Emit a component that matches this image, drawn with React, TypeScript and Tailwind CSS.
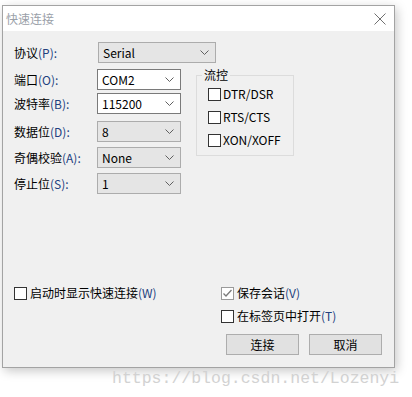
import React from "react";

const ui = "font-['Noto_Sans_CJK_SC','Noto_Sans',sans-serif] text-[12px] leading-[14px] text-black";

function Chevron() {
  return (
    <svg width="9" height="5" viewBox="0 0 9 5" className="shrink-0">
      <polyline points="0.5,0.5 4.5,4.5 8.5,0.5" fill="none" stroke="#606060" strokeWidth="1" />
    </svg>
  );
}

function Combo({ value, grey, width }: { value: string; grey?: boolean; width: string }) {
  return (
    <div
      className={`${width} h-[21px] flex items-center justify-between pl-[4px] pr-[6px] border ${
        grey ? "bg-[#e5e5e5] border-[#acacac]" : "bg-white border-[#7a7a7a]"
      }`}
    >
      <span>{value}</span>
      <Chevron />
    </div>
  );
}

function Label({ cn, key2 }: { cn: string; key2: string }) {
  return (
    <div className="w-[94px] shrink-0 pl-[11px] whitespace-nowrap">
      {cn}
      <span className="text-[#22407e]">{key2}</span>
    </div>
  );
}

function CheckBox({ checked, disabled }: { checked?: boolean; disabled?: boolean }) {
  return (
    <span
      className={`w-[13px] h-[13px] shrink-0 flex items-center justify-center border bg-white ${
        disabled ? "border-[#9a9a9a]" : "border-[#333333]"
      }`}
    >
      {checked && (
        <svg width="11" height="11" viewBox="0 0 11 11">
          <polyline points="1.5,5.5 4,8 9.5,2" fill="none" stroke="#7a7a7a" strokeWidth="1.3" />
        </svg>
      )}
    </span>
  );
}

export default function App() {
  return (
    <div className={`${ui} w-[412px] h-[397px] bg-white pt-[5px] pl-[2px] overflow-hidden`}>
      {/* dialog window */}
      <div className="w-[393px] h-[363px] flex flex-col border border-[#a3a3a3] shadow-[2px_3px_10px_rgba(0,0,0,0.22)]">
        {/* title bar */}
        <div className="h-[25px] bg-white flex items-center justify-between pl-[3px] pr-[8px] shrink-0">
          <span className="text-[#9aa0a8] mt-[1px]">快速连接</span>
          <svg width="12" height="12" viewBox="0 0 12 12">
            <path d="M0.5 0.5 L11.5 11.5 M11.5 0.5 L0.5 11.5" stroke="#707070" strokeWidth="1" fill="none" />
          </svg>
        </div>

        {/* body */}
        <div className="flex-1 bg-[#f0f0f0] flex flex-col">
          <div className="flex items-center mt-[11px]">
            <Label cn="协议" key2="(P):" />
            <div className="ml-[1px]">
              <Combo value="Serial" grey width="w-[118px]" />
            </div>
          </div>

          <div className="flex items-start mt-[6px]">
            <div className="flex flex-col">
              <div className="flex items-center">
                <Label cn="端口" key2="(O):" />
                <Combo value="COM2" width="w-[84px]" />
              </div>
              <div className="flex items-center mt-[3px]">
                <Label cn="波特率" key2="(B):" />
                <Combo value="115200" width="w-[84px]" />
              </div>
              <div className="flex items-center mt-[7px]">
                <Label cn="数据位" key2="(D):" />
                <Combo value="8" grey width="w-[84px]" />
              </div>
              <div className="flex items-center mt-[5px]">
                <Label cn="奇偶校验" key2="(A):" />
                <Combo value="None" grey width="w-[84px]" />
              </div>
              <div className="flex items-center mt-[5px]">
                <Label cn="停止位" key2="(S):" />
                <Combo value="1" grey width="w-[84px]" />
              </div>
            </div>

            <fieldset className="ml-[15px] -mt-[1px] w-[98px] h-[88px] border border-[#dcdcdc] pl-[5px]">
              <legend className="px-[2px]">流控</legend>
              <div className="flex flex-col gap-[9px] ml-[6px] mt-[5px]">
                {["DTR/DSR", "RTS/CTS", "XON/XOFF"].map((t) => (
                  <div key={t} className="flex items-center gap-[2px]">
                    <CheckBox />
                    <span>{t}</span>
                  </div>
                ))}
              </div>
            </fieldset>
          </div>

          <div className="flex-1" />

          {/* bottom options and buttons */}
          <div className="flex pb-[12px]">
            <div className="w-[218px] shrink-0 pl-[11px] flex items-start">
              <div className="flex items-center gap-[3px]">
                <CheckBox />
                <span>
                  启动时显示快速连接<span className="text-[#22407e]">(W)</span>
                </span>
              </div>
            </div>
            <div className="flex flex-col">
              <div className="flex items-center gap-[3px]">
                <CheckBox checked disabled />
                <span>
                  保存会话<span className="text-[#22407e]">(V)</span>
                </span>
              </div>
              <div className="flex items-center gap-[3px] mt-[9px]">
                <CheckBox />
                <span>
                  在标签页中打开<span className="text-[#22407e]">(T)</span>
                </span>
              </div>
              <div className="flex gap-[10px] ml-[5px] mt-[11px]">
                <button className="w-[73px] h-[21px] bg-[#e1e1e1] border border-[#adadad] flex items-center justify-center">
                  连接
                </button>
                <button className="w-[73px] h-[21px] bg-[#e1e1e1] border border-[#adadad] flex items-center justify-center">
                  取消
                </button>
              </div>
            </div>
          </div>
        </div>
      </div>

      {/* watermark */}
      <div className="pl-[110px] mt-[1px] font-['Liberation_Mono',monospace] text-[16.5px] leading-[20px] text-[#d2d2d2]">
        https://blog.csdn.net/Lozenyi
      </div>
    </div>
  );
}
